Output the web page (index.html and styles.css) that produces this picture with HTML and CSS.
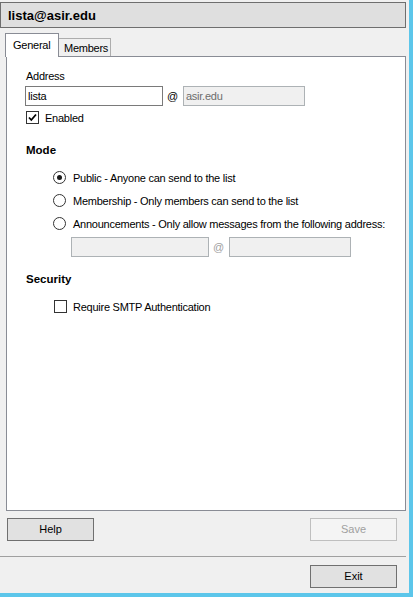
FILE: index.html
```html
<!DOCTYPE html>
<html>
<head>
<meta charset="utf-8">
<link rel="stylesheet" href="styles.css">
</head>
<body>
<div class="window">
  <div class="titlebar">lista@asir.edu</div>
  <div class="tabs">
    <div class="tab tab-active">General</div>
    <div class="tab tab-inactive">Members</div>
  </div>
  <div class="pane">
    <div class="label">Address</div>
    <div class="addr-row">
      <div class="field field-main">lista</div>
      <span class="at">@</span>
      <div class="field field-disabled">asir.edu</div>
    </div>
    <div class="check-row">
      <span class="checkbox">
        <svg width="11" height="11" viewBox="0 0 11 11"><path d="M2 5.5 L4.3 8 L9 2.5" fill="none" stroke="#000" stroke-width="1.8"/></svg>
      </span>
      <span class="check-label">Enabled</span>
    </div>
    <div class="heading heading-mode">Mode</div>
    <div class="radios">
      <div class="radio-row"><span class="radio radio-on"><span class="dot"></span></span><span class="opt">Public - Anyone can send to the list</span></div>
      <div class="radio-row"><span class="radio"></span><span class="opt">Membership - Only members can send to the list</span></div>
      <div class="radio-row"><span class="radio"></span><span class="opt">Announcements - Only allow messages from the following address:</span></div>
    </div>
    <div class="addr-row ann-row">
      <div class="field field-disabled field-ann1"></div>
      <span class="at at-disabled">@</span>
      <div class="field field-disabled field-ann2"></div>
    </div>
    <div class="heading heading-security">Security</div>
    <div class="check-row smtp-row">
      <span class="checkbox"></span>
      <span class="smtp-label">Require SMTP Authentication</span>
    </div>
  </div>
  <div class="button-row">
    <div class="btn btn-normal">Help</div>
    <div class="btn btn-disabled">Save</div>
  </div>
  <div class="separator"></div>
  <div class="button-row exit-row">
    <div class="btn btn-normal">Exit</div>
  </div>
</div>
</body>
</html>
```
FILE: styles.css
```css
html, body {
  margin: 0;
  padding: 0;
}
body {
  width: 413px;
  height: 597px;
  box-sizing: border-box;
  background: #f0f0f0;
  border-right: 4px solid #5cc6ea;
  border-bottom: 4px solid #5cc6ea;
  font-family: "Liberation Sans", Arial, sans-serif;
  font-size: 11px;
  letter-spacing: -0.25px;
  color: #000;
  overflow: hidden;
}
.window {
  width: 406px;
  padding-top: 2px;
}
.titlebar {
  height: 26px;
  box-sizing: border-box;
  border: 1px solid #6e6e6e;
  background: #dfdfdf;
  padding: 4px 0 0 7px;
  line-height: 18px;
  font-size: 13px;
  font-weight: bold;
  letter-spacing: 0;
}
.tabs {
  display: flex;
  align-items: flex-start;
  height: 23px;
  margin: 5px 0 0 5px;
}
.tab {
  box-sizing: border-box;
  line-height: 16px;
}
.tab-active {
  position: relative;
  z-index: 1;
  width: 54px;
  height: 24px;
  background: #fff;
  border: 1px solid #898c95;
  border-bottom: none;
  padding: 3px 0 0 7px;
}
.tab-inactive {
  width: 53px;
  height: 18px;
  margin-top: 5px;
  margin-left: -1px;
  background: #f0f0f0;
  border: 1px solid #adadad;
  border-bottom: none;
  padding: 1px 0 0 5px;
}
.pane {
  width: 400px;
  height: 455px;
  margin-left: 6px;
  box-sizing: border-box;
  border: 1px solid #898c95;
  background: #fff;
  padding: 13px 0 0 19px;
}
.label {
  height: 13px;
  line-height: 13px;
}
.addr-row {
  display: flex;
  align-items: center;
  margin-top: 3px;
  margin-left: -1px;
  height: 20px;
}
.field {
  box-sizing: border-box;
  height: 20px;
  line-height: 18px;
  padding-left: 2px;
}
.field-main {
  width: 138px;
  border: 1px solid #7a7a7a;
  background: #fff;
}
.field-disabled {
  width: 122px;
  border: 1px solid #adb2b5;
  background: #f0f0f0;
  color: #6d6d6d;
}
.at {
  width: 11px;
  margin: 0 5px 0 4px;
  font-size: 11px;
  letter-spacing: 0;
}
.at-disabled {
  color: #a0a0a0;
}
.check-row {
  display: flex;
  align-items: center;
  height: 13px;
  margin-top: 5px;
}
.checkbox {
  box-sizing: border-box;
  width: 13px;
  height: 13px;
  border: 1px solid #333;
  background: #fff;
  display: flex;
  align-items: center;
  justify-content: center;
}
.check-label {
  margin-left: 6px;
  padding-top: 1px;
}
.heading {
  font-weight: bold;
  font-size: 11.5px;
  letter-spacing: 0;
  height: 14px;
  line-height: 14px;
}
.heading-mode {
  margin-top: 19px;
}
.radios {
  margin-top: 9px;
  padding-left: 27px;
}
.radio-row {
  display: flex;
  align-items: center;
  height: 23px;
}
.radio {
  box-sizing: border-box;
  width: 13px;
  height: 13px;
  border: 1px solid #333;
  border-radius: 50%;
  background: #fff;
  display: flex;
  align-items: center;
  justify-content: center;
}
.dot {
  width: 5px;
  height: 5px;
  border-radius: 50%;
  background: #1a1a1a;
}
.opt {
  margin-left: 7px;
}
.ann-row {
  margin-top: 2px;
  margin-left: 45px;
}
.field-ann1 {
  width: 138px;
}
.field-ann2 {
  width: 122px;
}
.heading-security {
  margin-top: 15px;
}
.smtp-row {
  margin-top: 14px;
  padding-left: 28px;
}
.smtp-label {
  margin-left: 6px;
}
.button-row {
  display: flex;
  justify-content: space-between;
  margin-top: 7px;
  padding: 0 9px 0 7px;
}
.btn {
  box-sizing: border-box;
  width: 87px;
  height: 23px;
  line-height: 21px;
  text-align: center;
  letter-spacing: 0;
}
.btn-normal {
  background: #e1e1e1;
  border: 1px solid #707070;
}
.btn-disabled {
  background: #f4f4f4;
  border: 1px solid #bfbfbf;
  color: #a0a0a0;
}
.separator {
  margin-top: 15px;
  height: 1px;
  background: #a0a0a0;
}
.exit-row {
  margin-top: 8px;
  justify-content: flex-end;
}
```
